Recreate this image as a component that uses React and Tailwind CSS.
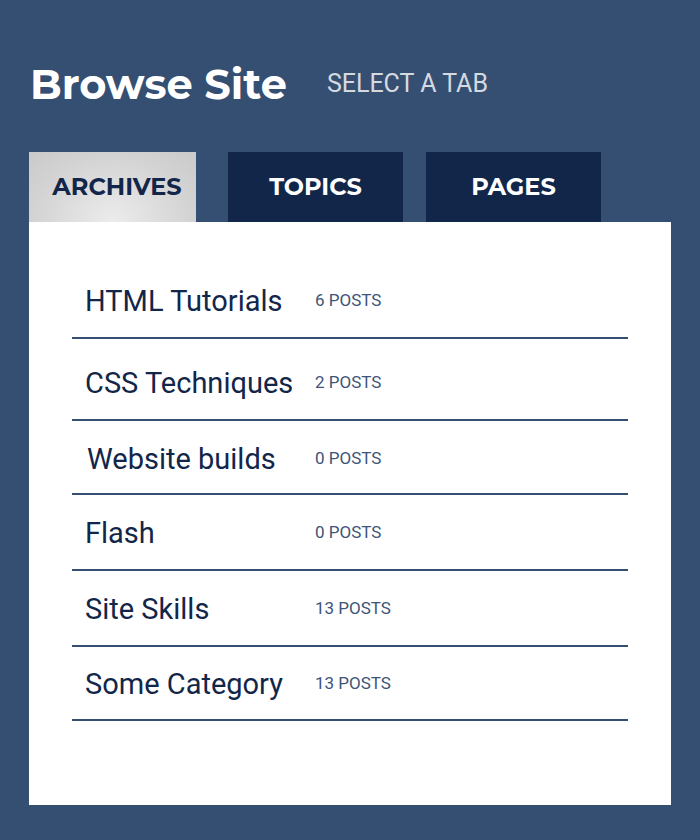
const categories = [
  { name: "HTML Tutorials", posts: "6 POSTS", row: "h-[76px] pt-[21px]", indent: "pl-[13px]", nameW: "w-[230px]" },
  { name: "CSS Techniques", posts: "2 POSTS", row: "h-[82px] pt-[27px]", indent: "pl-[13px]", nameW: "w-[230px]" },
  { name: "Website builds", posts: "0 POSTS", row: "h-[74px] pt-[21px]", indent: "pl-[15px]", nameW: "w-[228px]" },
  { name: "Flash", posts: "0 POSTS", row: "h-[76px] pt-[21px]", indent: "pl-[13px]", nameW: "w-[230px]" },
  { name: "Site Skills", posts: "13 POSTS", row: "h-[76px] pt-[21px]", indent: "pl-[13px]", nameW: "w-[230px]" },
  { name: "Some Category", posts: "13 POSTS", row: "h-[74px] pt-[20px]", indent: "pl-[13px]", nameW: "w-[230px]" },
];

const heading = { fontFamily: "Montserrat, Inter, 'Open Sans', sans-serif" };

function App() {
  return (
    <div
      className="min-h-[840px] w-[700px] bg-[#354f72] px-[29px] pt-[58px]"
      style={{ fontFamily: "Roboto, 'Liberation Sans', sans-serif" }}
    >
      <div className="flex items-center gap-[40px] pl-[1px]">
        <h1 className="text-[41.5px] font-bold leading-[52px] text-white" style={heading}>
          Browse Site
        </h1>
        <span className="text-[25px] font-normal text-[#d6d9e0]">SELECT A TAB</span>
      </div>

      <div className="mt-[42px] flex h-[70px]" style={heading}>
        <button
          type="button"
          className="flex h-full w-[167px] items-center justify-center bg-[radial-gradient(ellipse_at_50%_100%,#ececec_0%,#d2d2d2_70%,#cacaca_100%)] pl-[9px] text-[24px] font-bold text-[#12264a]"
        >
          ARCHIVES
        </button>
        <button
          type="button"
          className="ml-[32px] flex h-full w-[175px] items-center justify-center bg-[#12264a] text-[24px] font-bold text-white"
        >
          TOPICS
        </button>
        <button
          type="button"
          className="ml-[23px] flex h-full w-[175px] items-center justify-center bg-[#12264a] text-[24px] font-bold text-white"
        >
          PAGES
        </button>
      </div>

      <div className="h-[583px] bg-white px-[43px] pt-[41px]">
        <ul>
          {categories.map((c) => (
            <li key={c.name} className={`${c.row} border-b-2 border-[#354f72]`}>
              <div className={`flex h-[34px] items-center ${c.indent}`}>
                <span className={`${c.nameW} text-[29px] leading-[34px] text-[#12264a]`}>
                  {c.name}
                </span>
                <span className="text-[17px] text-[#3e5478]">{c.posts}</span>
              </div>
            </li>
          ))}
        </ul>
      </div>
    </div>
  );
}

export default App;
